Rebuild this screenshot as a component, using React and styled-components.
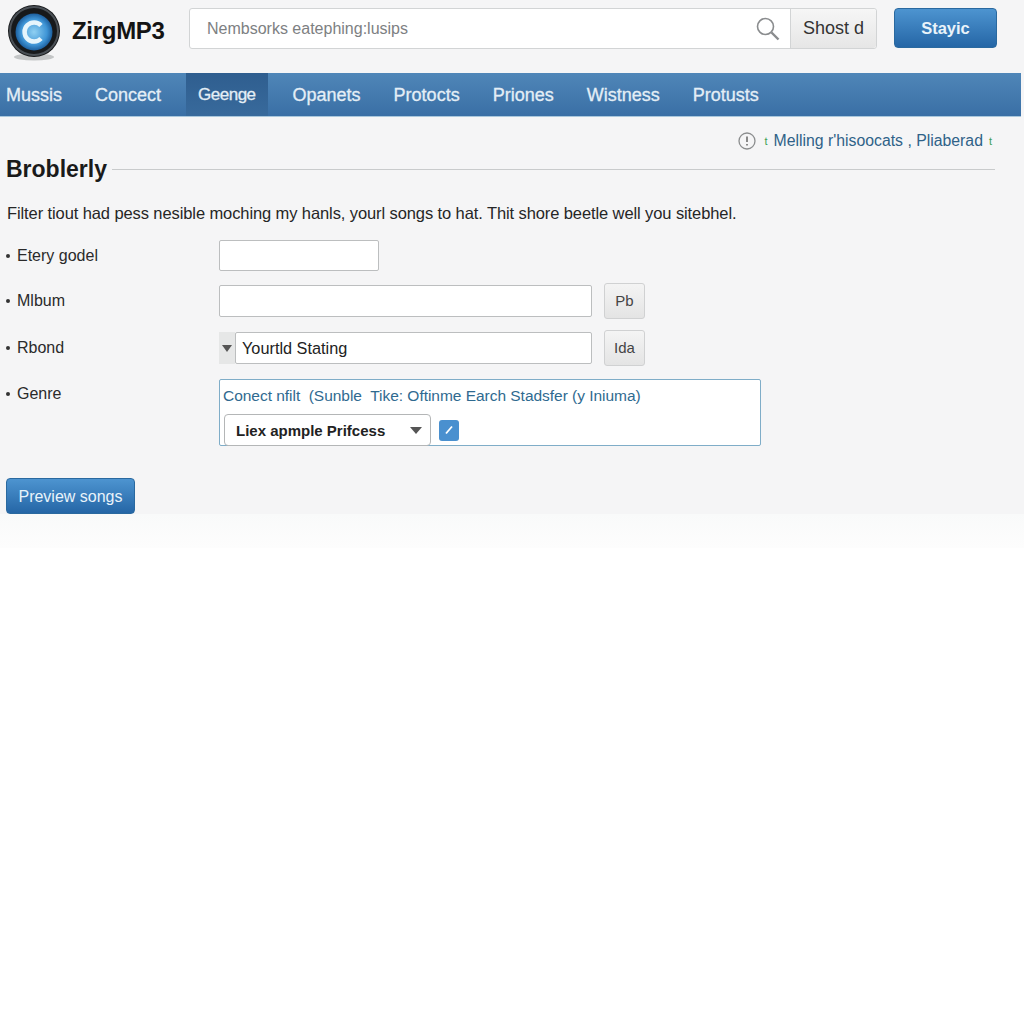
import styled, { createGlobalStyle } from 'styled-components';

const GlobalStyle = createGlobalStyle`
  html, body {
    margin: 0;
    padding: 0;
    background: #fff;
    font-family: "Liberation Sans", Arial, sans-serif;
  }
  * { box-sizing: border-box; }
`;

const Page = styled.div`
  background: #f5f5f6;
  height: 514px;
`;

const Header = styled.header`
  height: 73px;
  display: flex;
  align-items: flex-start;
  padding: 5px 27px 0 7px;
`;

const Logo = styled.div`
  display: flex;
  align-items: center;
  gap: 11px;
  width: 182px;
  height: 56px;
  font-size: 24px;
  font-weight: 700;
  letter-spacing: -0.3px;
  color: #141414;
  span { padding-bottom: 4px; }
`;

const Search = styled.div`
  margin-top: 3px;
  width: 688px;
  height: 41px;
  display: flex;
  background: #fff;
  border: 1px solid #d2d4d5;
  border-radius: 3px;
`;

const SearchText = styled.div`
  flex: 1;
  padding-left: 17px;
  line-height: 39px;
  font-size: 16px;
  color: #7d8082;
`;

const SearchIcon = styled.div`
  width: 35px;
  display: flex;
  align-items: center;
`;

const SearchButton = styled.div`
  width: 86px;
  border-left: 1px solid #d2d4d5;
  border-radius: 0 3px 3px 0;
  background: linear-gradient(#f6f6f6, #e6e6e6);
  text-align: center;
  line-height: 38px;
  font-size: 18px;
  color: #333;
`;

const BlueButton = styled.div`
  background: linear-gradient(#4d94d0, #2566a6);
  border: 1px solid #2a699f;
  border-radius: 4px;
  color: #e9f3fa;
  font-size: ${p => p.$size}px;
  font-weight: ${p => p.$weight || 400};
  text-align: center;
`;

const StayButton = styled(BlueButton)`
  margin: 3px 0 0 17px;
  width: 103px;
  height: 40px;
  line-height: 38px;
`;

const Nav = styled.nav`
  height: 43px;
  margin-right: 3px;
  display: flex;
  gap: 9px;
  background: linear-gradient(#4f86b8, #3a6fa5);
  box-shadow: 0 1px 0 #a9c7dc;
`;

const NavItem = styled.div`
  padding: 0 12px;
  margin: ${p => (p.$active ? '0 4px' : '0')};
  line-height: 44px;
  font-size: ${p => (p.$active ? '17px' : '18px')};
  letter-spacing: ${p => (p.$active ? '-0.5px' : '0')};
  -webkit-text-stroke: 0.3px #e4eef6;
  color: #e4eef6;
  background: ${p => (p.$active ? 'linear-gradient(#2f5e8f, #386a9c)' : 'none')};
  &:first-child { padding-left: 6px; }
`;

const Content = styled.main`
  padding: 14px 29px 0 6px;
`;

const Note = styled.div`
  height: 22px;
  padding-right: 3px;
  display: flex;
  justify-content: flex-end;
  align-items: center;
  gap: 6px;
  font-size: 15.8px;
  color: #2f6288;
`;

const NoteIcon = styled.svg`
  margin-right: 3px;
`;

const Tick = styled.span`
  color: #3f9f55;
  font-size: 11px;
`;

const TitleRow = styled.div`
  margin-top: 5px;
  height: 24px;
  display: flex;
  align-items: center;
  gap: 5px;
`;

const Title = styled.h1`
  margin: 0;
  font-size: 23px;
  font-weight: 700;
  color: #1a1a1a;
`;

const Rule = styled.div`
  flex: 1;
  height: 1px;
  background: #c9cbcc;
`;

const Intro = styled.p`
  margin: 22px 0 0 1px;
  line-height: 20px;
  font-size: 16.5px;
  letter-spacing: -0.1px;
  color: #262626;
`;

const Form = styled.div`
  margin-top: 17px;
  display: grid;
  grid-template-columns: 213px 1fr;
  grid-template-rows: 32px 36px 36px 69px;
  row-gap: 11px;
  align-items: center;
`;

const Label = styled.div`
  align-self: ${p => (p.$top ? 'start' : 'center')};
  padding-top: ${p => (p.$top ? '8px' : '0')};
  display: flex;
  gap: 7px;
  align-items: center;
  font-size: 16px;
  color: #2a2a2a;
  &::before {
    content: '';
    width: 4px;
    height: 4px;
    border-radius: 50%;
    background: #333;
  }
`;

const Line = styled.div`
  display: flex;
  align-items: center;
  gap: 12px;
`;

const TopLine = styled(Line)`
  align-self: start;
`;

const Input = styled.div`
  width: ${p => p.$width}px;
  height: ${p => p.$height || 32}px;
  background: #fff;
  border: 1px solid #bcbebf;
  border-radius: 2px;
  padding-left: 6px;
  line-height: 30px;
  font-size: 16.3px;
  color: #222;
`;

const SelectWrap = styled.div`
  display: flex;
`;

const SelectArrow = styled.div`
  width: 16px;
  height: 32px;
  background: #e6e7e7;
  display: flex;
  align-items: center;
  justify-content: center;
`;

const SmallButton = styled.div`
  width: 41px;
  height: 36px;
  background: linear-gradient(#f4f4f4, #e4e4e4);
  border: 1px solid #d0d1d2;
  border-radius: 3px;
  text-align: center;
  line-height: 34px;
  font-size: 15px;
  color: #444;
`;

const GenreBox = styled.div`
  align-self: end;
  width: 542px;
  height: 67px;
  background: #fff;
  border: 1px solid #7fadc8;
  border-radius: 2px;
  padding: 6px 4px 6px 3px;
`;

const GenreText = styled.div`
  line-height: 20px;
  font-size: 15.5px;
  letter-spacing: -0.03px;
  white-space: pre;
  color: #2f6a90;
`;

const GenreControls = styled.div`
  margin: 8px 0 0 1px;
  display: flex;
  align-items: center;
  gap: 8px;
`;

const Dropdown = styled.div`
  width: 207px;
  height: 32px;
  display: flex;
  align-items: center;
  justify-content: space-between;
  padding: 0 8px 0 11px;
  border: 1px solid #b4b6b7;
  border-radius: 4px;
  font-size: 15px;
  font-weight: 700;
  color: #222;
`;

const EditIcon = styled.div`
  width: 20px;
  height: 21px;
  border-radius: 3px;
  background: #4a90cf;
  display: flex;
  align-items: center;
  justify-content: center;
`;

const PreviewButton = styled(BlueButton)`
  margin-top: 32px;
  width: 129px;
  height: 36px;
  line-height: 36px;
`;

const Fade = styled.div`
  height: 34px;
  background: linear-gradient(#f9fafa, #fdfdfd);
`;

const Arrow = ({ w = 12, h = 7, color = '#555' }) => (
  <svg width={w} height={h} viewBox="0 0 12 8" preserveAspectRatio="none">
    <path d="M0 0h12L6 8z" fill={color} />
  </svg>
);

const LogoMark = () => (
  <svg width="54" height="56" viewBox="0 0 54 56">
    <defs>
      <radialGradient id="lens" cx="50%" cy="50%" r="50%">
        <stop offset="0%" stopColor="#8fd0f2" />
        <stop offset="70%" stopColor="#3f95d6" />
        <stop offset="100%" stopColor="#1d5f9e" />
      </radialGradient>
    </defs>
    <ellipse cx="27" cy="52" rx="20" ry="3.5" fill="#c4c6c7" />
    <circle cx="27" cy="26" r="26" fill="#17191b" />
    <circle cx="27" cy="26" r="24" fill="none" stroke="#4a5056" strokeWidth="2" />
    <circle cx="27" cy="27" r="18.5" fill="url(#lens)" />
    <path d="M34 20.5a9.5 9.5 0 1 0 0 13" fill="none" stroke="#e6f5fc" strokeWidth="4.5" />
  </svg>
);

const navItems = ['Mussis', 'Concect', 'Geenge', 'Opanets', 'Protocts', 'Priones', 'Wistness', 'Protusts'];

export default function App() {
  return (
    <>
      <GlobalStyle />
      <Page>
        <Header>
          <Logo>
            <LogoMark />
            <span>ZirgMP3</span>
          </Logo>
          <Search>
            <SearchText>Nembsorks eatephing:lusips</SearchText>
            <SearchIcon>
              <svg width="26" height="26" viewBox="0 0 26 26" fill="none" stroke="#8a8c8e">
                <circle cx="10.5" cy="10.5" r="8" strokeWidth="1.6" />
                <path d="M16.5 16.5l7 7" strokeWidth="2.4" />
              </svg>
            </SearchIcon>
            <SearchButton>Shost d</SearchButton>
          </Search>
          <StayButton $size={16.5} $weight={700}>Stayic</StayButton>
        </Header>

        <Nav>
          {navItems.map(item => (
            <NavItem key={item} $active={item === 'Geenge'}>{item}</NavItem>
          ))}
        </Nav>

        <Content>
          <Note>
            <NoteIcon width="18" height="18" viewBox="0 0 18 18">
              <circle cx="9" cy="9" r="8" fill="none" stroke="#8b8d8e" strokeWidth="1.3" />
              <path d="M9 4.5v5.5M9 12v1.6" stroke="#666" strokeWidth="1.5" />
            </NoteIcon>
            <Tick>t</Tick>
            <span>Melling r'hisoocats , Pliaberad</span>
            <Tick>t</Tick>
          </Note>

          <TitleRow>
            <Title>Broblerly</Title>
            <Rule />
          </TitleRow>

          <Intro>Filter tiout had pess nesible moching my hanls, yourl songs to hat. Thit shore beetle well you sitebhel.</Intro>

          <Form>
            <Label>Etery godel</Label>
            <TopLine>
              <Input $width={160} $height={31} />
            </TopLine>

            <Label>Mlbum</Label>
            <Line>
              <Input $width={373} />
              <SmallButton>Pb</SmallButton>
            </Line>

            <Label>Rbond</Label>
            <Line>
              <SelectWrap>
                <SelectArrow><Arrow w={10} h={7} /></SelectArrow>
                <Input $width={357}>Yourtld Stating</Input>
              </SelectWrap>
              <SmallButton>Ida</SmallButton>
            </Line>

            <Label $top>Genre</Label>
            <GenreBox>
              <GenreText>Conect nfilt  (Sunble  Tike: Oftinme Earch Stadsfer (y Iniuma)</GenreText>
              <GenreControls>
                <Dropdown>
                  <span>Liex apmple Prifcess</span>
                  <Arrow />
                </Dropdown>
                <EditIcon>
                  <svg width="12" height="12" viewBox="0 0 12 12">
                    <path d="M3 9.5L9 2.5" stroke="#fff" strokeWidth="1.8" />
                  </svg>
                </EditIcon>
              </GenreControls>
            </GenreBox>
          </Form>

          <PreviewButton $size={16}>Preview songs</PreviewButton>
        </Content>
      </Page>
      <Fade />
    </>
  );
}
